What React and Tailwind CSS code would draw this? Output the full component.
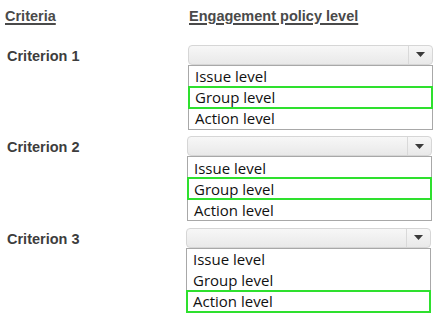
import React from 'react';

const options = ['Issue level', 'Group level', 'Action level'];

const rows = [
  { label: 'Criterion 1', selected: 1, shift: 'ml-[188px]' },
  { label: 'Criterion 2', selected: 1, shift: 'ml-[187px]' },
  { label: 'Criterion 3', selected: 2, shift: 'ml-[186px]' },
];

const Dropdown = ({ selected }) => (
  <div className="w-[245px]">
    {/* closed select */}
    <div className="h-[20px] flex rounded-[4px] border border-[#d6d6d6] bg-gradient-to-b from-[#f7f7f7] to-[#e9e9e9]">
      <div className="flex-1" />
      <div className="w-[24px] border-l border-[#d9d9d9] flex items-center justify-center">
        <svg width="9" height="5" viewBox="0 0 9 5">
          <path d="M0 0 L9 0 L4.5 5 Z" fill="#3a3a3a" />
        </svg>
      </div>
    </div>
    {/* open list */}
    <div className="border border-[#a8a8a8] bg-white w-[245px]">
      {options.map((opt, i) => (
        <div
          key={opt}
          className={`h-[21px] flex items-center pl-[6px] text-[15px] text-[#111] font-['Open_Sans',sans-serif] ${
            i === selected ? 'outline-2 outline-solid outline-[#2ee02e] -outline-offset-1 relative' : ''
          }`}
        >
          {opt}
        </div>
      ))}
    </div>
  </div>
);

export default function App() {
  return (
    <div className="w-[441px] h-[320px] bg-white font-['Liberation_Sans',Arial,sans-serif] overflow-hidden">
      <div className="flex pt-[6px] text-[14.5px] font-bold text-[#4a4a4a] underline underline-offset-2 decoration-[1.5px]">
        <div className="w-[189px] pl-[5px]">Criteria</div>
        <div>Engagement policy level</div>
      </div>
      <div className="flex flex-col gap-[6.5px] mt-[17px]">
        {rows.map((r) => (
          <div key={r.label} className="relative flex">
            <div className="absolute left-[7px] top-[1px] text-[14.5px] font-bold text-[#3d3d3d]">{r.label}</div>
            <div className={r.shift}>
              <Dropdown selected={r.selected} />
            </div>
          </div>
        ))}
      </div>
    </div>
  );
}
